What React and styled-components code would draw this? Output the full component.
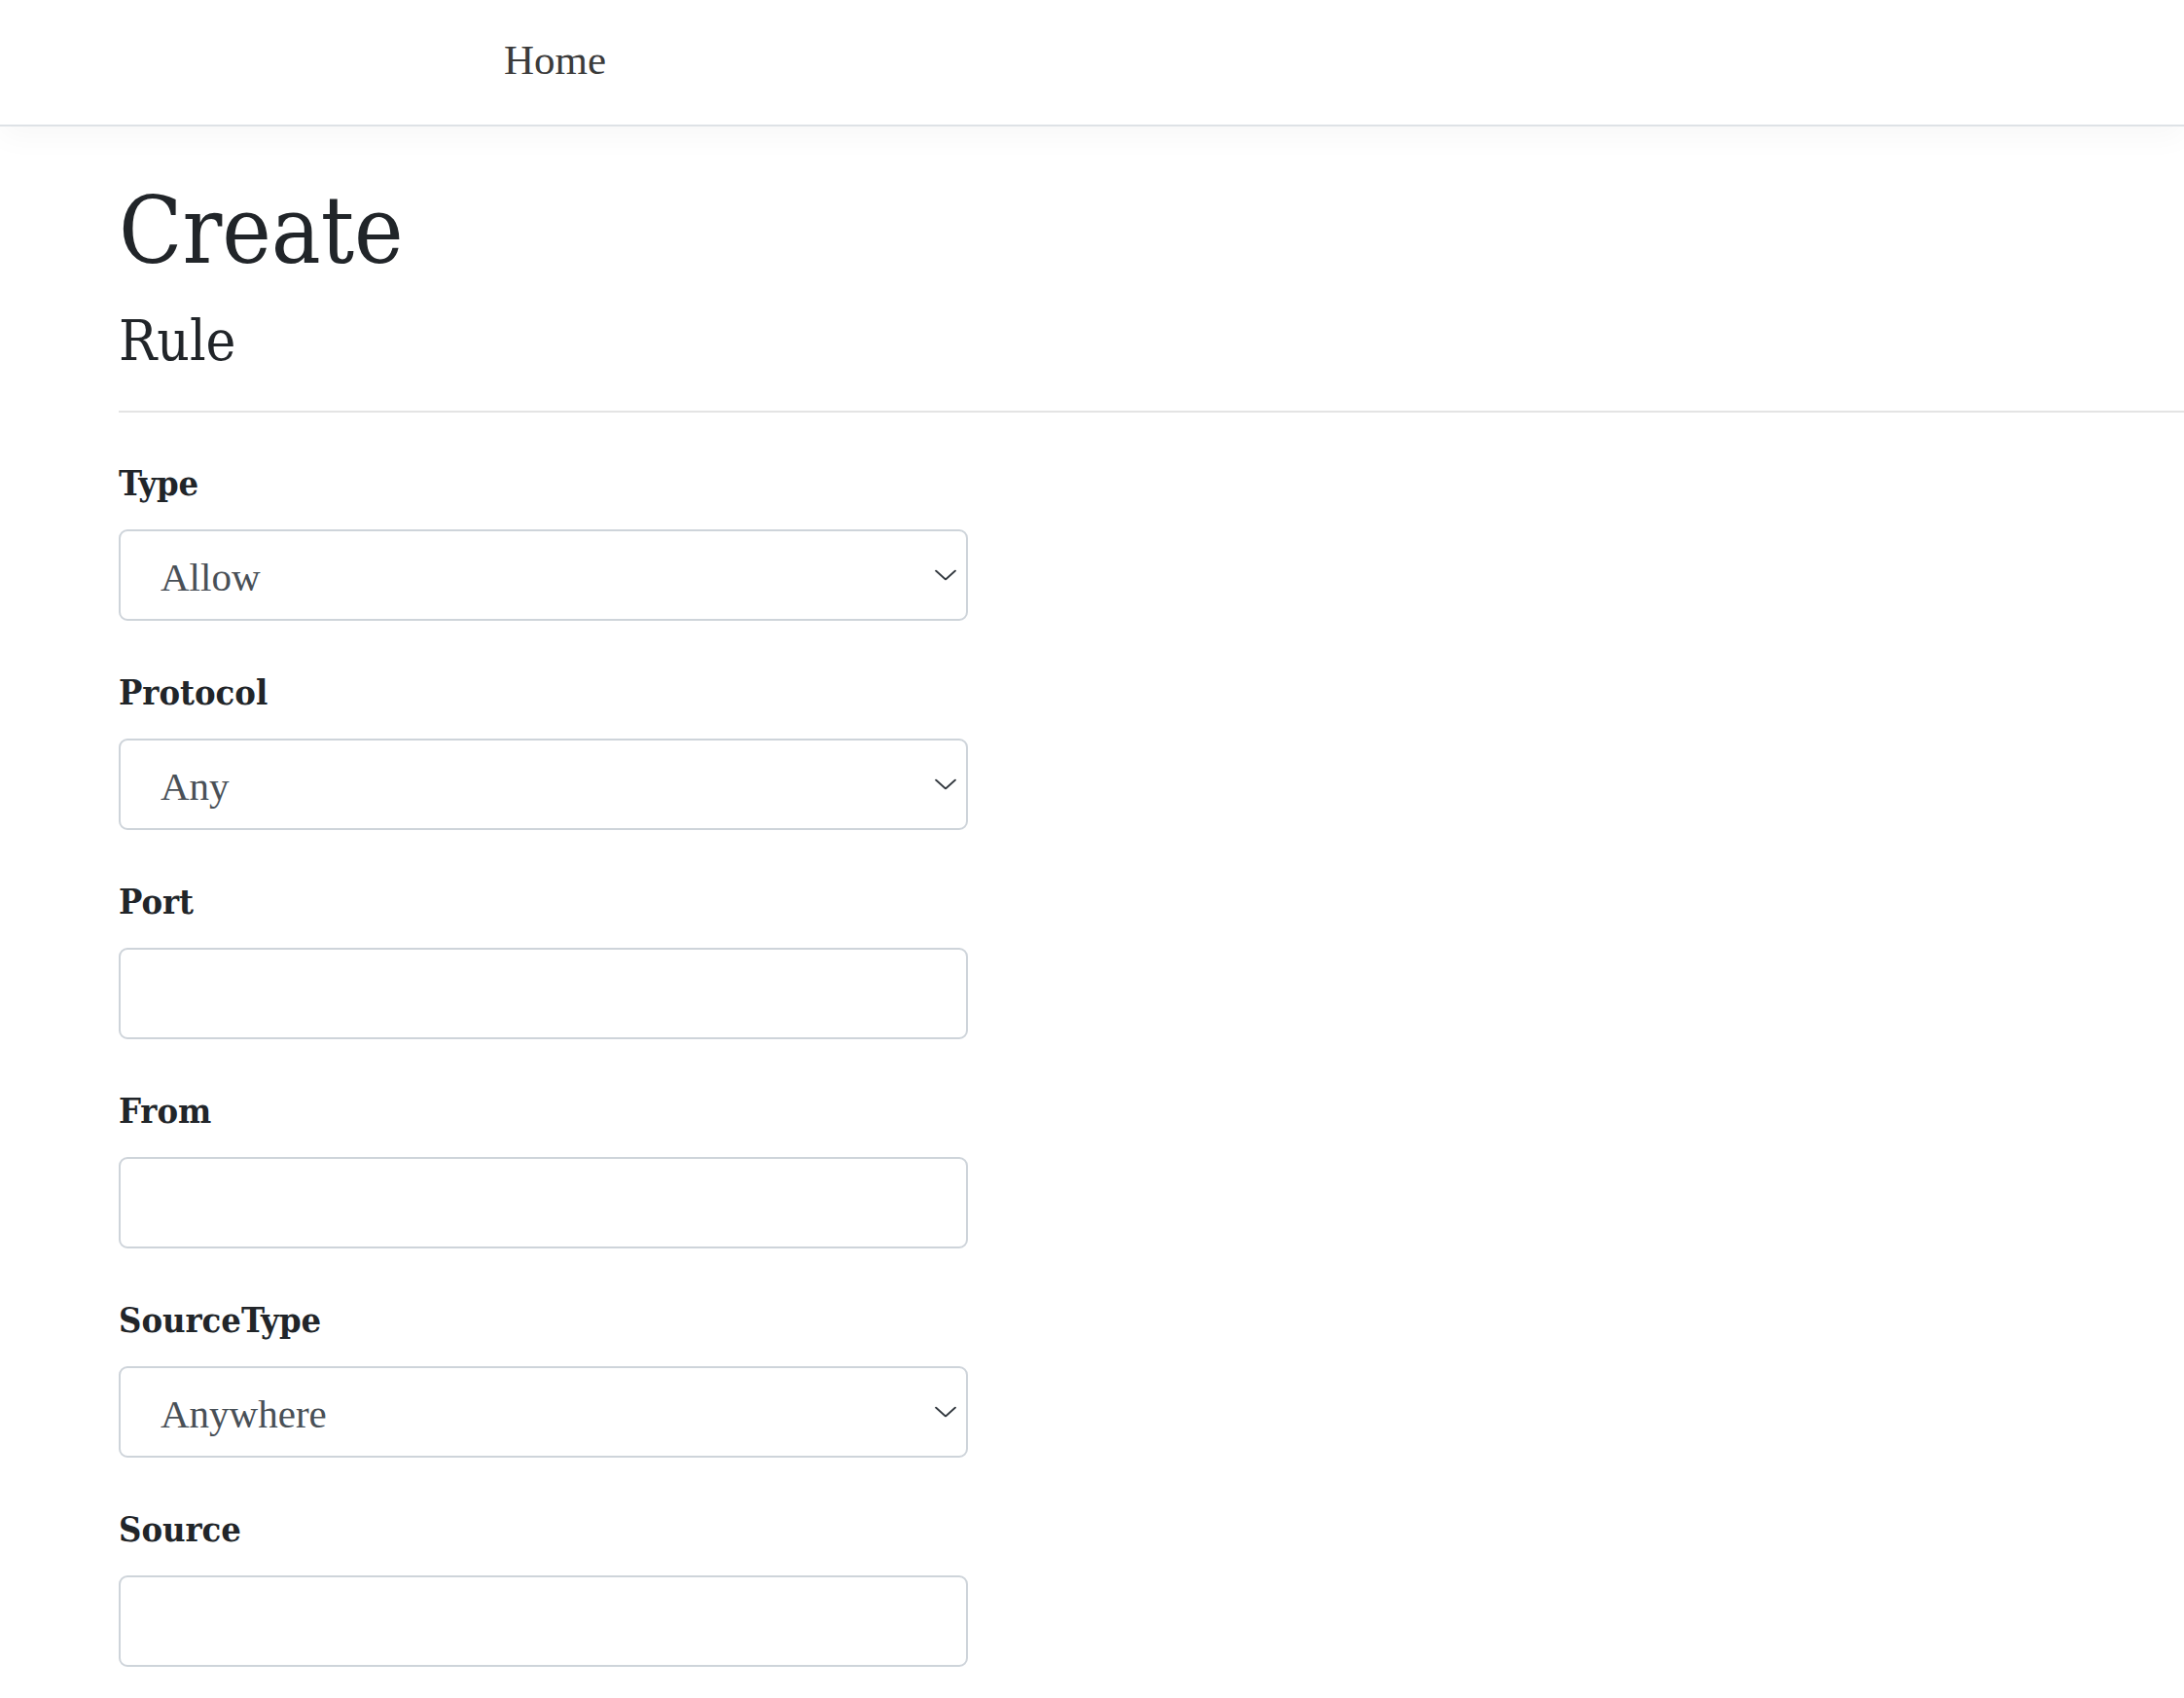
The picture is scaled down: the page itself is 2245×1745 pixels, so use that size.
import React, { useState } from 'react';
import styled, { createGlobalStyle } from 'styled-components';

const GlobalStyle = createGlobalStyle`
  html, body {
    margin: 0;
    padding: 0;
    background: #ffffff;
  }
  body {
    font-family: "DejaVu Serif", "Liberation Serif", serif;
    color: #212529;
  }
`;

const Navbar = styled.nav`
  height: 130px;
  display: flex;
  align-items: center;
  padding: 0 0 6px 518px;
  box-sizing: border-box;
  background: #fff;
  border-bottom: 2px solid #dee2e6;
  box-shadow: 0 10px 30px rgba(0, 0, 0, 0.035);
  position: relative;
  z-index: 1;
`;

const NavLink = styled.a`
  font-family: "Liberation Serif", serif;
  font-size: 43px;
  color: #3b3b3b;
  text-decoration: none;
`;

const Main = styled.main`
  padding: 50px 0 40px 122px;
`;

const Title = styled.h1`
  margin: 0;
  font-size: 95px;
  font-weight: 400;
  font-stretch: condensed;
  line-height: 1.2;
  color: #212529;
`;

const Subtitle = styled.h2`
  margin: 22px 0 0;
  font-size: 58px;
  font-weight: 400;
  font-stretch: condensed;
  line-height: 1.2;
  color: #212529;
`;

const Divider = styled.hr`
  margin: 36px 0 51px;
  border: 0;
  border-top: 2px solid #e4e4e4;
`;

const Form = styled.form`
  display: flex;
  flex-direction: column;
  gap: 52px;
`;

const Group = styled.div`
  display: flex;
  flex-direction: column;
  width: 873px;
`;

const Label = styled.label`
  font-size: 36px;
  font-weight: 700;
  font-stretch: condensed;
  line-height: 42px;
  margin-bottom: 27px;
  color: #212529;
`;

const controlStyles = `
  box-sizing: border-box;
  width: 100%;
  height: 94px;
  padding: 0 60px 0 41px;
  font-family: "Liberation Serif", serif;
  font-size: 41px;
  color: #495057;
  background: #fff;
  border: 2px solid #ced4da;
  border-radius: 9px;
  outline: none;
`;

const Input = styled.input`
  ${controlStyles}
`;

const SelectWrap = styled.div`
  position: relative;
`;

const Select = styled.select`
  ${controlStyles}
  appearance: none;
  -webkit-appearance: none;
  padding-top: 4px;
`;

const Chevron = styled.svg`
  position: absolute;
  right: 12px;
  top: 50%;
  transform: translateY(-50%);
  pointer-events: none;
`;

function SelectField({ value, onChange, options }) {
  return (
    <SelectWrap>
      <Select value={value} onChange={(e) => onChange(e.target.value)}>
        {options.map((o) => (
          <option key={o}>{o}</option>
        ))}
      </Select>
      <Chevron width="22" height="11" viewBox="0 0 22 11" fill="none">
        <path d="M1 1 L11 10 L21 1" stroke="#343a40" strokeWidth="1.8" strokeLinecap="round" strokeLinejoin="round" />
      </Chevron>
    </SelectWrap>
  );
}

export default function App() {
  const [type, setType] = useState('Allow');
  const [protocol, setProtocol] = useState('Any');
  const [port, setPort] = useState('');
  const [from, setFrom] = useState('');
  const [sourceType, setSourceType] = useState('Anywhere');
  const [source, setSource] = useState('');

  return (
    <>
      <GlobalStyle />
      <Navbar>
        <NavLink href="#">Home</NavLink>
      </Navbar>
      <Main>
        <Title>Create</Title>
        <Subtitle>Rule</Subtitle>
        <Divider />
        <Form onSubmit={(e) => e.preventDefault()}>
          <Group>
            <Label>Type</Label>
            <SelectField value={type} onChange={setType} options={['Allow', 'Deny']} />
          </Group>
          <Group>
            <Label>Protocol</Label>
            <SelectField value={protocol} onChange={setProtocol} options={['Any', 'TCP', 'UDP']} />
          </Group>
          <Group>
            <Label>Port</Label>
            <Input type="text" value={port} onChange={(e) => setPort(e.target.value)} />
          </Group>
          <Group>
            <Label>From</Label>
            <Input type="text" value={from} onChange={(e) => setFrom(e.target.value)} />
          </Group>
          <Group>
            <Label>SourceType</Label>
            <SelectField value={sourceType} onChange={setSourceType} options={['Anywhere', 'IP', 'Subnet']} />
          </Group>
          <Group>
            <Label>Source</Label>
            <Input type="text" value={source} onChange={(e) => setSource(e.target.value)} />
          </Group>
        </Form>
      </Main>
    </>
  );
}
